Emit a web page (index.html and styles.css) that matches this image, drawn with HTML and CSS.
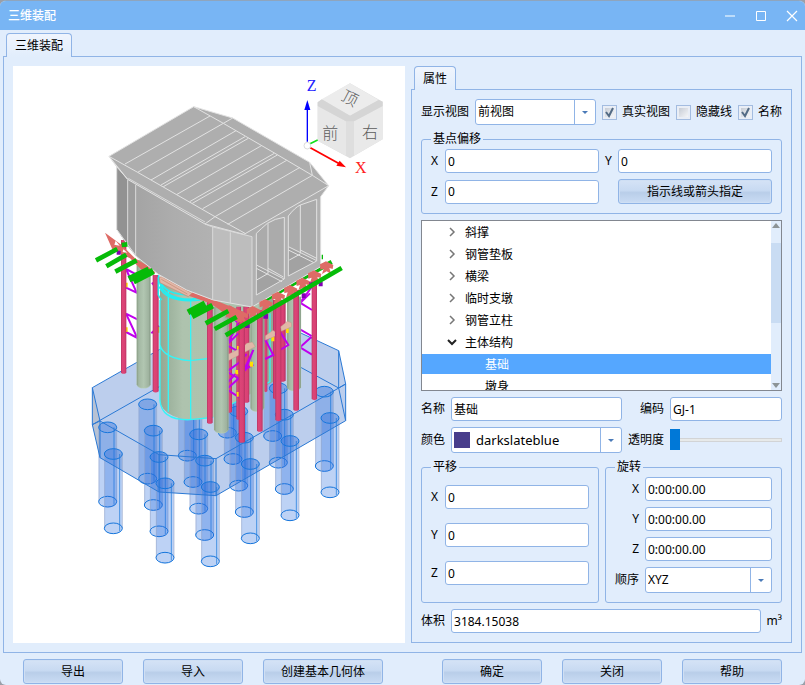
FILE: index.html
```html
<!DOCTYPE html>
<html lang="zh-CN">
<head>
<meta charset="utf-8">
<title>三维装配</title>
<link rel="stylesheet" href="styles.css">
</head>
<body>
<div class="window">
  <header class="titlebar">
    <h1 class="title">三维装配</h1>
    <div class="window-controls">
      <button type="button" class="win-btn" aria-label="最小化"><svg width="12" height="12" viewBox="0 0 12 12"><path d="M1 6H11" stroke="#bcdcfa" stroke-width="2"/></svg></button>
      <button type="button" class="win-btn" aria-label="最大化"><svg width="12" height="12" viewBox="0 0 12 12"><path d="M1.500 1.500H10.500V10.500H1.500Z" fill="none" stroke="#fff"/></svg></button>
      <button type="button" class="win-btn" aria-label="关闭窗口"><svg width="12" height="12" viewBox="0 0 12 12"><path d="M1 1L11 11M11 1L1 11" stroke="#fff" stroke-width="1.200"/></svg></button>
    </div>
  </header>

  <main class="tabs main-tabs">
    <div class="tab-row"><button type="button" class="tab">三维装配</button></div>
    <div class="tab-body workspace">
      <div class="viewport">
        <svg class="scene" viewBox="0 0 1176 1731" role="img" aria-label="三维模型">
          <defs>
            <linearGradient id="steel"><stop offset="0" stop-color="#b53562"/><stop offset=".25" stop-color="#dc4577"/><stop offset=".7" stop-color="#d94174"/><stop offset="1" stop-color="#b83362"/></linearGradient>
            <linearGradient id="tube"><stop offset="0" stop-color="#84987f"/><stop offset=".15" stop-color="#a3b8a3"/><stop offset=".5" stop-color="#b1c6b1"/><stop offset=".85" stop-color="#9fb39f"/><stop offset="1" stop-color="#7f937f"/></linearGradient>
            <linearGradient id="pier"><stop offset="0" stop-color="#93a893"/><stop offset=".2" stop-color="#aec3ae"/><stop offset=".7" stop-color="#adc2ad"/><stop offset="1" stop-color="#92a792"/></linearGradient>
            <linearGradient id="wall"><stop offset="0" stop-color="#a4a4a4"/><stop offset=".5" stop-color="#adadad"/><stop offset="1" stop-color="#b2b2b2"/></linearGradient>
            <g id="pile">
              <path d="M-27 0V223A27 17 0 0 0 27 223V0A27 16 0 0 0 -27 0Z" fill="#2b6fe0" fill-opacity=".31"/>
              <path d="M-26 0V223M27 0V223" stroke="#9aa9c9" stroke-opacity=".6" stroke-width="3"/>
              <path d="M19 0V232" stroke="#1676dc" stroke-opacity=".7" stroke-width="3"/>
              <ellipse rx="27" ry="16" fill="#2b68d6" fill-opacity=".14" stroke="#1676dc" stroke-width="3"/>
              <ellipse cy="223" rx="27" ry="16" fill="none" stroke="#1676dc" stroke-width="3"/>
            </g>
            <g id="bracket"><path d="M-20 -7L-2 -16L20 -5L18 7L8 4L14 23L0 14L-14 22L-9 6L-19 9Z" fill="#de6b66"/></g>
          </defs>

          <!-- foundation -->
          <g transform="translate(201 762)">
            <path d="M37 203L250 82L408 -8H560L660 38L776 92L797 192V302L408 527L237 516L60 413L37 314Z" fill="#346bc8" fill-opacity=".33"/>
            <path d="M37 203L60 303V413L37 314Z" fill="#b3b3b3" fill-opacity=".45"/>
            <use href="#pile" x="442" y="115"/><use href="#pile" x="578" y="125"/><use href="#pile" x="595" y="205"/>
            <use href="#pile" x="733" y="215"/><use href="#pile" x="750" y="294"/><use href="#pile" x="322" y="184"/>
            <use href="#pile" x="459" y="194"/><use href="#pile" x="613" y="284"/><use href="#pile" x="630" y="363"/>
            <use href="#pile" x="476" y="274"/><use href="#pile" x="493" y="353"/><use href="#pile" x="511" y="432"/>
            <use href="#pile" x="339" y="263"/><use href="#pile" x="203" y="253"/><use href="#pile" x="220" y="332"/>
            <use href="#pile" x="356" y="343"/><use href="#pile" x="237" y="411"/><use href="#pile" x="83" y="322"/>
            <use href="#pile" x="100" y="402"/><use href="#pile" x="374" y="422"/><use href="#pile" x="255" y="490"/>
            <use href="#pile" x="391" y="501"/>
            <path d="M250 82L37 203L60 303L237 404L408 416L797 192L776 92L660 38M37 203V314L60 413L237 516L408 527L797 302V192M37 314L238 200M60 303V413M237 404V516M408 416V527M776 92V204L797 302M776 204L640 130M776 204L797 192M37 314L60 303" fill="none" stroke="#2a79d5" stroke-width="3"/>
          </g>

          <!-- pier and towers -->
          <g transform="translate(201 762)">
            <g stroke="#c000ee" stroke-width="6" fill="none">
              <path d="M138 -153L170 -82L138 -97M138 -153L170 -136M138 -19L172 54L138 36M138 -19L172 -2M216 -112L236 -85M214 40L238 18"/>
              <path d="M700 -105L660 -52L696 -30M662 -52L690 -80M660 28L695 48M695 50L660 82L696 104"/>
            </g>
            <path d="M134 -112h9v14h-9zM134 22h9v14h-9zM231 20h8v18h-8z" fill="#ffe100"/>
            <path d="M240 -130H580V185L455 252L400 292Q330 309 280 288Q242 270 240 242Z" fill="url(#pier)"/>
            <path d="M240 75Q250 115 330 122L382 116M240 242Q245 302 330 299L400 292M265 -90V275M332 -62V298M240 -60V242M570 -20V185L552 195M455 252L480 240" fill="none" stroke="#35f4f6" stroke-width="4"/>
            <g fill="url(#steel)">
              <path d="M123 -240h16V158q-8 7-16 0z"/>
              <path d="M218 -135h18V214q-9 7-18 0z"/>
              <path d="M441 -40h15V275q-8 7-15 0z"/><path d="M469 -40h14V296q-8 7-14 0z"/>
              <path d="M490 -40h18V245q-9 7-18 0z"/><path d="M552 -40h10V214q-5 5-10 0z"/>
              <path d="M592 -60h25V182q-12 7-25 0z"/><path d="M579 -60h24V235q-12 7-24 0z"/>
            </g>
            <g fill="url(#tube)" stroke="#c2dcc0" stroke-width="1">
              <path d="M170 -180h42V194q-5 11-21 11q-17 0-21-11z"/>
              <path d="M511 -50h42V264q-5 11-21 11q-17 0-21-11z"/>
              <path d="M621 -70h42V202q-5 11-21 11q-17 0-21-11z"/>
            </g>
            <g stroke="#c000ee" stroke-width="6" fill="none">
              <path d="M440 -20L476 10L440 75L476 95M440 75L475 40M440 155L476 175L440 208L478 232M440 155L475 130L500 102M495 153L520 90L492 150L520 134M556 60L580 105L556 117M556 60L600 35L625 75L600 90M440 190L478 150"/>
            </g>
            <g fill="#ffe100"><path d="M436 22h9v14h-9zM436 64h9v13h-9zM436 153h9v13h-9zM471 78h9v14h-9zM466 150h9v13h-9zM470 216h9v14h-9zM510 125h9v15h-9zM574 50h9v14h-9zM618 25h8v14h-8zM436 205h9v12h-9z"/></g>
            <g stroke="#b98f80" stroke-width="1" fill="#e1b7a7"><path d="M445 103L492 79L500 70L517 66L526 80L445 122Z"/><path d="M556 47L579 31L585 35V49L556 61Z"/></g>
            <path d="M402 -40h44V329q-6 11-22 11q-17 0-22-11z" fill="url(#tube)" stroke="#c2dcc0" stroke-width="1"/>
            <g fill="url(#steel)">
              <path d="M381 -70h17V308q-9 7-17 0z"/>
              <path d="M476 -10h19V365q-10 7-19 0z"/>
              <path d="M531 -30h17V332q-9 7-17 0z"/>
              <path d="M586 -50h18V300q-9 7-18 0z"/>
              <path d="M640 -90h17V269q-9 7-17 0z"/>
              <path d="M695 -120h16V237q-8 7-16 0z"/>
            </g>
            <path d="M602 20L622 4L634 8L635 20L604 34Z" fill="#e1b7a7" stroke="#b98f80" stroke-width="1"/>
            <path d="M236 -135Q237 -62 335 -62L365 -70M240 -122Q250 -75 335 -75M238 -100Q260 -50 360 -60M235 -130V-75Q240 -65 245 -60" fill="none" stroke="#22eff3" stroke-width="5"/>
          </g>

          <!-- beams behind the house -->
          <g transform="translate(501 522)">
            <path d="M250 182L455 66" stroke="#06bb08" stroke-width="13"/>
            <path d="M427 44V58" stroke="#06bb08" stroke-width="4"/>
            <path d="M195 250h14v14h-14zM250 222h14v14h-14zM365 160h12v14h-12zM385 125h12v14h-12zM416 125h12v14h-12z" fill="#8200b5"/>
            <path d="M-60 120L80 170L190 215L185 248L150 236L120 210L90 190L20 165Z" fill="#de6b66"/>
            <use href="#bracket" x="185" y="228"/><use href="#bracket" x="150" y="212"/>
          </g>
          <g transform="translate(201 462)">
            <path d="M238 172L255 168L340 215L325 230L240 188Z" fill="#e1b7a7" stroke="#c48672" stroke-width="2"/>
            <path d="M244 178L322 222M248 172L332 218" stroke="#c48672" stroke-width="2"/>
            <path d="M75 38L125 75L165 115L225 150V160H195L150 115L98 90Z" fill="#de6b66"/>
            <path d="M107 62l12 15l-16 -3zM130 88l12 10l-14 -2z" fill="#fff"/>
            <path d="M110 92h12v12h-12z" fill="#8200b5"/>
          </g>

          <!-- house -->
          <g transform="translate(201 72)" stroke-linejoin="round">
            <path d="M110 230L87 199L341 50L458 84L689 217L746 287L722 320L723 530L516 651L400 630L320 600L235 553L168 498L110 418Z" fill="#aeaeae"/>
            <path d="M110 230L143 270V468L110 418Z" fill="#929292"/><path d="M143 270L167 285V498L143 468Z" fill="#9d9d9d"/>
            <path d="M167 285L375 402L398 410V630L320 600L235 553L167 498Z" fill="url(#wall)"/>
            <path d="M398 410L492 433L516 440V651L398 630Z" fill="#bdbdbd"/>
            <path d="M516 440L722 320V530L516 651Z" fill="#b1b1b1"/>
            <path d="M529 430L562 400L613 382V570L529 615ZM625 378L661 345L710 328V513L625 558Z" fill="#ababab"/>
            <path d="M529 525L613 567L529 615ZM625 470L710 513L625 558Z" fill="#a2a2a2"/>
            <g fill="none" stroke="#e2e2e2" stroke-width="3">
              <path d="M110 230L87 199L341 50L458 84L689 217L746 287L722 320V530L516 651L400 630L320 600L235 553L168 498L110 418V230L143 268L375 402L492 433L746 287M87 199L173 247L405 380L495 430M341 50L430 100L585 190L697 256L746 287M87 199L143 268M375 402L405 380M430 100L458 84M697 256L689 217"/>
              <path d="M135 222L390 78M173 247L430 100M213 270L468 122M243 285L495 140M250 290L505 145M291 313L546 166M329 335L583 190M337 340L592 195M368 356L620 211M405 380L660 232M443 403L697 256"/>
              <path d="M143 270V468M167 285V498M398 410V630M451 427V640M516 440V651M375 402L395 410L516 440M145 265L375 396" stroke="#d9d9d9"/>
              <path d="M529 430Q545 415 562 400Q585 385 613 382V567L529 615ZM625 378Q645 352 661 345L710 328V513L625 558ZM564 400V550M661 345V490M529 525L612 567M529 535L606 575M565 550L530 570M564 535L610 561M625 470L708 511M625 480L700 517M661 492L628 510M661 480L710 505"/>
            </g>
          </g>

          <!-- supporting brackets and beams -->
          <g transform="translate(201 462)" stroke="#06bb08" stroke-width="14" fill="none">
            <path d="M48 121L112 87M79 139L139 104M106 155L170 121M125 75L142 73"/>
            <path d="M147 178L207 149M160 184L220 153" stroke-width="20"/>
          </g>
          <g transform="translate(501 522)">
            <use href="#bracket" x="220" y="214"/><use href="#bracket" x="258" y="193"/><use href="#bracket" x="295" y="171"/>
            <use href="#bracket" x="332" y="151"/><use href="#bracket" x="369" y="129"/><use href="#bracket" x="404" y="107"/>
            <use href="#bracket" x="440" y="80"/>
            <g stroke="#06bb08" stroke-width="14" fill="none">
              <path d="M24 217L75 190M36 229L98 197" stroke-width="18"/>
              <path d="M77 250L145 213M104 267L170 231M137 286L485 84"/>
            </g>
          </g>

          <!-- view cube -->
          <g transform="translate(831 12)">
            <path d="M180 40L278 95V208L180 265L83 212V97Z" fill="#dedede"/>
            <path d="M180 40L266 90L180 137L95 88Z" fill="#ececec"/>
            <path d="M83 108L168 154V257L83 212Z" fill="#e7e7e7"/><path d="M192 154L278 108V208L192 257Z" fill="#e9e9e9"/>
            <path d="M83 97L95 88L180 137L266 90L278 95V108L192 154H168L83 108Z" fill="#d5d5d5"/>
            <g class="cube-face" text-anchor="middle"><text x="180" y="102" transform="rotate(28 180 84)">顶</text><text x="121" y="206">前</text><text x="240" y="204">右</text></g>
            <path d="M60 221L83 210" stroke="#12df19" stroke-width="5"/>
            <path d="M52 215V115" stroke="#00f" stroke-width="4"/><path d="M52 90L43 120H61Z" fill="#00f"/>
            <path d="M61 233L148 281" stroke="#f00" stroke-width="5"/><path d="M168 292L139 287L149 272Z" fill="#f00"/>
            <circle cx="52" cy="227" r="10" fill="#fff" stroke="#c8c8c8" stroke-width="2"/>
            <text class="axis axis-z" x="50" y="62">Z</text><text class="axis axis-x" x="195" y="308">X</text>
          </g>
        </svg>
      </div>

      <section class="tabs props">
        <div class="tab-row"><button type="button" class="tab">属性</button></div>
        <form class="tab-body prop-form">
          <div class="row view-row">
            <label for="view">显示视图</label>
            <span class="combo view-combo"><select id="view"><option>前视图</option></select></span>
            <label class="check"><input type="checkbox" checked>真实视图</label>
            <label class="check"><input type="checkbox">隐藏线</label>
            <label class="check"><input type="checkbox" checked>名称</label>
          </div>

          <fieldset>
            <legend>基点偏移</legend>
            <div class="offset-grid">
              <label for="bx">X</label><input id="bx" type="text" value="0">
              <label for="by">Y</label><input id="by" type="text" value="0">
              <label for="bz">Z</label><input id="bz" type="text" value="0">
              <button type="button" class="btn pick">指示线或箭头指定</button>
            </div>
          </fieldset>

          <div class="tree">
            <ul class="tree-list">
              <li><svg class="chev" viewBox="0 0 10 10"><path d="M3 1L7 5L3 9"/></svg>斜撑</li>
              <li><svg class="chev" viewBox="0 0 10 10"><path d="M3 1L7 5L3 9"/></svg>钢管垫板</li>
              <li><svg class="chev" viewBox="0 0 10 10"><path d="M3 1L7 5L3 9"/></svg>横梁</li>
              <li><svg class="chev" viewBox="0 0 10 10"><path d="M3 1L7 5L3 9"/></svg>临时支墩</li>
              <li><svg class="chev" viewBox="0 0 10 10"><path d="M3 1L7 5L3 9"/></svg>钢管立柱</li>
              <li><svg class="chev open" viewBox="0 0 10 10"><path d="M1 3L5 7L9 3"/></svg>主体结构</li>
              <li class="child selected">基础</li>
              <li class="child">墩身</li>
            </ul>
            <div class="scrollbar"><span class="arrow-up"></span><span class="thumb"></span><span class="arrow-down"></span></div>
          </div>

          <div class="pair-grid">
            <label for="name">名称</label><input id="name" type="text" value="基础">
            <label for="code" class="end">编码</label><input id="code" type="text" value="GJ-1">
          </div>
          <div class="pair-grid">
            <label for="color">颜色</label>
            <span class="combo color-combo"><select id="color"><option>darkslateblue</option></select><i class="swatch"></i></span>
            <label for="alpha" class="end">透明度</label><input id="alpha" type="range" min="0" max="100" value="0">
          </div>

          <div class="transforms">
            <fieldset>
              <legend>平移</legend>
              <div class="axis-grid move-grid">
                <label for="mx">X</label><input id="mx" type="text" value="0">
                <label for="my">Y</label><input id="my" type="text" value="0">
                <label for="mz">Z</label><input id="mz" type="text" value="0">
              </div>
            </fieldset>
            <fieldset>
              <legend>旋转</legend>
              <div class="axis-grid rotate-grid">
                <label for="rx">X</label><input id="rx" type="text" value="0:00:00.00">
                <label for="ry">Y</label><input id="ry" type="text" value="0:00:00.00">
                <label for="rz">Z</label><input id="rz" type="text" value="0:00:00.00">
                <label for="order">顺序</label><span class="combo"><select id="order"><option>XYZ</option></select></span>
              </div>
            </fieldset>
          </div>

          <div class="row volume-row"><label for="volume">体积</label><input id="volume" type="text" value="3184.15038"><span>m³</span></div>
        </form>
      </section>
    </div>
  </main>

  <footer class="actions">
    <div class="action-group"><button type="button" class="btn">导出</button><button type="button" class="btn">导入</button><button type="button" class="btn wide">创建基本几何体</button></div>
    <div class="action-group"><button type="button" class="btn">确定</button><button type="button" class="btn">关闭</button><button type="button" class="btn">帮助</button></div>
  </footer>
</div>
</body>
</html>
```
FILE: styles.css
```css
:root {
  --face: #e1edfc;
  --line: #90b4e6;
}
* { box-sizing: border-box; }
html { background: #9a9fa8; }
body {
  margin: 0;
  font: 12px/16px "Noto Sans", "Noto Sans CJK SC", sans-serif;
  color: #000;
}
button, input, select { font: inherit; color: inherit; margin: 0; }
.window {
  display: flex;
  flex-direction: column;
  min-height: 100vh;
  border-top: 1px solid #8fa5bd;
  border-radius: 6px;
  background: var(--face);
  overflow: hidden;
}
.titlebar {
  display: flex;
  justify-content: space-between;
  align-items: center;
  height: 29px;
  padding: 0 7px 0 8px;
  background: #78b5f4;
}
.title { margin: 0; font-size: 12px; font-weight: 500; color: #fff; }
.window-controls { display: flex; gap: 19px; }
.win-btn { display: flex; padding: 0; border: 0; background: none; }

.tabs { display: flex; flex-direction: column; }
.main-tabs { flex: 1; padding: 3px 3px 0; }
.tab-row { display: flex; padding-left: 3px; }
.tab {
  position: relative;
  height: 24px;
  margin-bottom: -1px;
  padding: 0 8px;
  border: 1px solid var(--line);
  border-bottom: 0;
  border-radius: 4px 4px 0 0;
  background: linear-gradient(#f0f5fd, var(--face));
}
.tab-body { flex: 1; border: 1px solid var(--line); padding: 9px; }
.workspace {
  display: grid;
  grid-template-columns: minmax(0, 1fr) 381px;
  gap: 6px;
}
.viewport { display: flex; background: #fff; }
.scene { width: 100%; height: auto; align-self: flex-start; }
.cube-face { font: 48px "Noto Sans CJK SC", sans-serif; font-weight: 300; fill: #5c5c5c; }
.axis { font: 48px "Liberation Serif", serif; }
.axis-z { fill: #22f; }
.axis-x { fill: #f22; }

.prop-form { display: flex; flex-direction: column; gap: 6px; }
.row { display: flex; align-items: center; }
input[type="text"] {
  width: 100%;
  min-width: 0;
  height: 24px;
  padding: 0 2px;
  border: 1px solid var(--line);
  border-radius: 3px;
  background: #fff;
}
.combo { position: relative; display: flex; }
.combo select {
  appearance: none;
  width: 100%;
  height: 26px;
  padding: 0 22px 0 2px;
  border: 1px solid var(--line);
  border-radius: 3px;
  background:
    linear-gradient(var(--line), var(--line)) right 20px top / 1px 100% no-repeat,
    #fff;
}
.combo::after {
  content: "";
  position: absolute;
  right: 8px;
  top: 12px;
  border: 3px solid transparent;
  border-top-color: #4a7ab8;
  border-bottom: 0;
  pointer-events: none;
}
.view-row { justify-content: space-between; }
.view-combo { width: 121px; }
.check { display: flex; align-items: center; gap: 5px; }
.check input {
  appearance: none;
  width: 15px;
  height: 15px;
  border: 1px solid #a3bce0;
  background: linear-gradient(135deg, #c6ccd5, #f5f6f8) content-box, #e9eef6;
  padding: 2px;
}
.check input:checked {
  background: url("data:image/svg+xml,%3Csvg xmlns='http://www.w3.org/2000/svg' viewBox='0 0 13 13'%3E%3Cpath d='M3 6l3 4l4-8' fill='none' stroke='%23536b85' stroke-width='2'/%3E%3C/svg%3E") padding-box, linear-gradient(135deg, #c6ccd5, #f5f6f8) content-box, #e9eef6;
}

fieldset {
  min-width: 0;
  margin: 0;
  padding: 2px 9px 9px;
  border: 1px solid var(--line);
  border-radius: 3px;
}
legend { margin-left: 0; padding: 0 2px; height: 16px; }
.offset-grid {
  display: grid;
  grid-template-columns: 8px 1fr 7px 1fr;
  gap: 6px;
  align-items: center;
}
.btn {
  width: 100px;
  height: 25px;
  padding: 0;
  border: 1px solid var(--line);
  border-radius: 3px;
  background: linear-gradient(#d5e3f6, #c8daf2 45%, #b9cee9 55%, #cadcf4);
  box-shadow: inset 0 0 0 1px #cfdff4;
}
.btn.pick { grid-column: 4; width: auto; }
.btn.wide { width: 120px; }

.tree {
  display: flex;
  flex: 1 0 171px;
  height: 171px;
  border: 1px solid #828790;
  background: #fff;
  overflow: hidden;
}
.tree-list {
  flex: 1;
  display: flex;
  flex-direction: column;
  gap: 2px;
  margin: 0;
  padding: 1px 0 0;
  list-style: none;
}
.tree-list li {
  display: flex;
  flex: none;
  align-items: center;
  gap: 8px;
  height: 20px;
  padding: 2px 0 0 25px;
}
.tree-list .child { padding-left: 63px; }
.tree-list .selected { background: #55a7ff; color: #fff; }
.chev { width: 10px; height: 10px; margin-top: -2px; fill: none; stroke: #777; stroke-width: 1.5; }
.chev.open { stroke: #222; stroke-width: 2; }
.scrollbar {
  display: flex;
  flex-direction: column;
  align-items: center;
  width: 10px;
  padding: 2px 0;
  background: var(--face);
}
.arrow-up { border: 4px solid transparent; border-top: 0; border-bottom: 5px solid #8d9496; }
.arrow-down { margin-top: auto; border: 4px solid transparent; border-bottom: 0; border-top: 5px solid #8d9496; }
.thumb { width: 100%; height: 80px; margin-top: 15px; background: #c9dcf3; }

.pair-grid {
  display: grid;
  grid-template-columns: 24px 171px 36px 1fr;
  gap: 6px;
  align-items: center;
}
.end { text-align: right; }
.color-combo select { padding-left: 24px; font-size: 13px; }
.swatch { position: absolute; left: 3px; top: 5px; width: 16px; height: 16px; background: #483d8b; }
input[type="range"] {
  appearance: none;
  width: 100%;
  height: 22px;
  background: none;
}
input[type="range"]::-webkit-slider-runnable-track {
  height: 4px;
  border: 1px solid #d2d4d6;
  background: #e7eaea;
}
input[type="range"]::-webkit-slider-thumb {
  appearance: none;
  width: 10px;
  height: 21px;
  margin: -10px 0 0 -1px;
  background: #0078d7;
}
.transforms { display: grid; grid-template-columns: 178px 1fr; gap: 6px; }
.axis-grid { display: grid; gap: 6px; align-items: center; }
.move-grid { grid-template-columns: 8px 1fr; padding: 8px 0 0; row-gap: 14px; }
.move-grid input[type="text"] { width: 144px; }
.rotate-grid { grid-template-columns: 24px 1fr; }
.rotate-grid label { text-align: right; }
.volume-row { gap: 6px; }
.volume-row input[type="text"] { flex: 1; }

.actions {
  display: flex;
  justify-content: space-between;
  padding: 6px 23px 1px;
}
.action-group { display: flex; gap: 20px; }
```
